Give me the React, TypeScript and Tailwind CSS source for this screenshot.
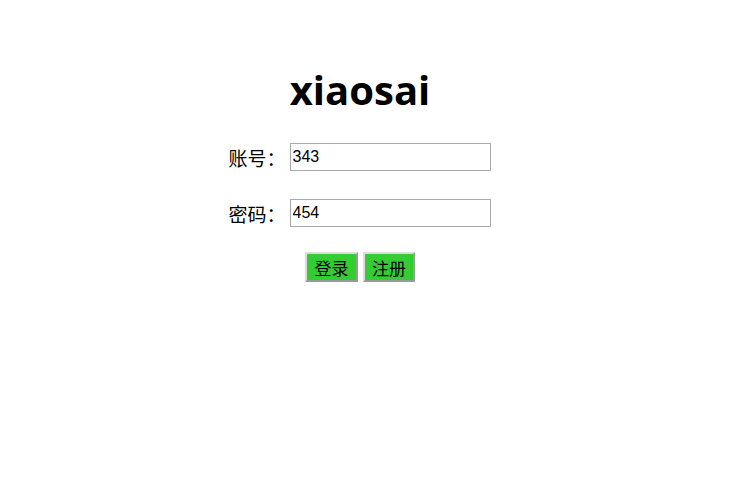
import React from "react";

const cjk = { fontFamily: '"Noto Sans CJK SC", sans-serif' };

function Field({ label, value }: { label: string; value: string }) {
  return (
    <div className="flex items-center h-[28px]">
      <span className="text-[19px] text-black leading-none w-[61px]" style={cjk}>
        {label}
      </span>
      <input
        defaultValue={value}
        className="w-[201px] h-[28px] border border-[#a9a9a9] px-[2px] text-[16px] text-black outline-none font-['Liberation_Sans',sans-serif]"
      />
    </div>
  );
}

export default function App() {
  return (
    <div className="w-[750px] h-[502px] bg-white">
      <div className="w-[720px] flex flex-col items-center pt-[66px]">
        <h1 className="text-[40px] font-bold leading-[48px] text-black font-['Open_Sans',sans-serif]">
          xiaosai
        </h1>
        <div className="flex flex-col gap-[28px] mt-[29px] ml-[-1px]">
          <Field label="账号：" value="343" />
          <Field label="密码：" value="454" />
        </div>
        <div className="flex gap-[5px] mt-[25px]">
          <button
            className="h-[30px] w-[53px] bg-[#33cc33] text-[17px] text-black border-2 border-t-[#dcdcdc] border-l-[#dcdcdc] border-b-[#9a9a9a] border-r-[#9a9a9a] leading-none"
            style={cjk}
          >
            登录
          </button>
          <button
            className="h-[30px] w-[52px] bg-[#33cc33] text-[17px] text-black border-2 border-t-[#dcdcdc] border-l-[#dcdcdc] border-b-[#9a9a9a] border-r-[#9a9a9a] leading-none"
            style={cjk}
          >
            注册
          </button>
        </div>
      </div>
    </div>
  );
}
